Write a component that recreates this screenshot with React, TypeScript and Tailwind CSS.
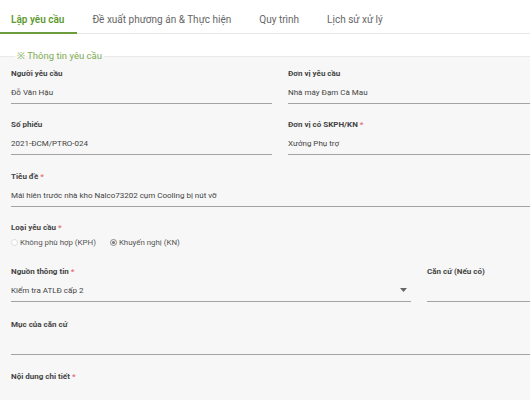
import React from 'react';

const tabs = ['Lập yêu cầu', 'Đề xuất phương án & Thực hiện', 'Quy trình', 'Lịch sử xử lý'];

const Field: React.FC<{ label: string; value?: string; required?: boolean; className?: string; select?: boolean }> = ({
  label,
  value,
  required,
  className = '',
  select,
}) => (
  <div className={`flex flex-col ${className}`}>
    <div className="text-[8px] font-bold text-[#444] leading-[12px]">
      {label}
      {required && <span className="text-[#e57373]"> *</span>}
    </div>
    <div className="relative mt-[7px] h-[17px] border-b border-[#a3a3a3] text-[8px] leading-[12px] text-[#444]">
      {value}
      {select && (
        <svg className="absolute right-[4px] top-[3px]" width="7" height="4" viewBox="0 0 7 4">
          <path d="M0 0h7L3.5 4z" fill="#666" />
        </svg>
      )}
    </div>
  </div>
);

const Radio: React.FC<{ checked?: boolean; label: string }> = ({ checked, label }) => (
  <label className="flex items-center gap-[2px] text-[7.9px] text-[#555]">
    <span
      className={`flex h-[7px] w-[7px] items-center justify-center rounded-full border ${
        checked ? 'border-[#888]' : 'border-[#ddd] bg-white'
      }`}
    >
      {checked && <span className="h-[3px] w-[3px] rounded-full bg-[#777]" />}
    </span>
    {label}
  </label>
);

export default function App() {
  return (
    <div className="h-[400px] w-[530px] overflow-hidden bg-white font-['Roboto',sans-serif]">
      {/* Tabs */}
      <div className="flex h-[34px] items-end border-b border-[#e8e8e8] pl-[11px]">
        {tabs.map((t, i) => (
          <div
            key={t}
            className={`relative mr-[28px] pb-[6px] text-[10px] leading-[14px] ${
              i === 0 ? 'font-semibold text-[#5f9a32]' : 'text-[#666]'
            }`}
          >
            {t}
            {i === 0 && <span className="absolute -left-[11px] -right-[13px] -bottom-px h-[2px] bg-[#6c9c3c]" />}
          </div>
        ))}
      </div>

      <div className="w-[600px] pt-[16px]">
        <fieldset className="border-0 border-t border-[#e9e9e9] bg-[#f7f7f7] px-[11px] pb-[20px]">
          <legend className="ml-[4px] px-[2px] text-[9.5px] leading-[12px] text-[#80ad55]">※ Thông tin yêu cầu</legend>

          <div className="mt-[6px] flex gap-[16px]">
            <Field className="w-[261px]" label="Người yêu cầu" value="Đỗ Văn Hậu" />
            <Field className="w-[261px]" label="Đơn vị yêu cầu" value="Nhà máy Đạm Cà Mau" />
          </div>
          <div className="mt-[15px] flex gap-[16px]">
            <Field className="w-[261px]" label="Số phiếu" value="2021-ĐCM/PTRO-024" />
            <Field className="w-[261px]" label="Đơn vị có SKPH/KN" required value="Xưởng Phụ trợ" />
          </div>
          <div className="mt-[16px]">
            <Field className="w-[538px]" label="Tiêu đề" required value="Mái hiên trước nhà kho Nalco73202 cụm Cooling bị nút vỡ" />
          </div>

          <div className="mt-[15px] flex flex-col">
            <div className="text-[8px] font-bold text-[#444] leading-[12px]">
              Loại yêu cầu<span className="text-[#e57373]"> *</span>
            </div>
            <div className="mt-[3px] flex gap-[14px]">
              <Radio label="Không phù hợp (KPH)" />
              <Radio checked label="Khuyến nghị (KN)" />
            </div>
          </div>

          <div className="mt-[17px] flex gap-[16px]">
            <Field className="w-[400px]" label="Nguồn thông tin" required value="Kiểm tra ATLĐ cấp 2" select />
            <Field className="w-[122px]" label="Căn cứ (Nếu có)" />
          </div>
          <div className="mt-[17px]">
            <Field className="w-[538px]" label="Mục của căn cứ" />
          </div>
          <div className="mt-[16px] text-[8px] font-bold text-[#444] leading-[12px]">
            Nội dung chi tiết<span className="text-[#e57373]"> *</span>
          </div>
        </fieldset>
      </div>
    </div>
  );
}
